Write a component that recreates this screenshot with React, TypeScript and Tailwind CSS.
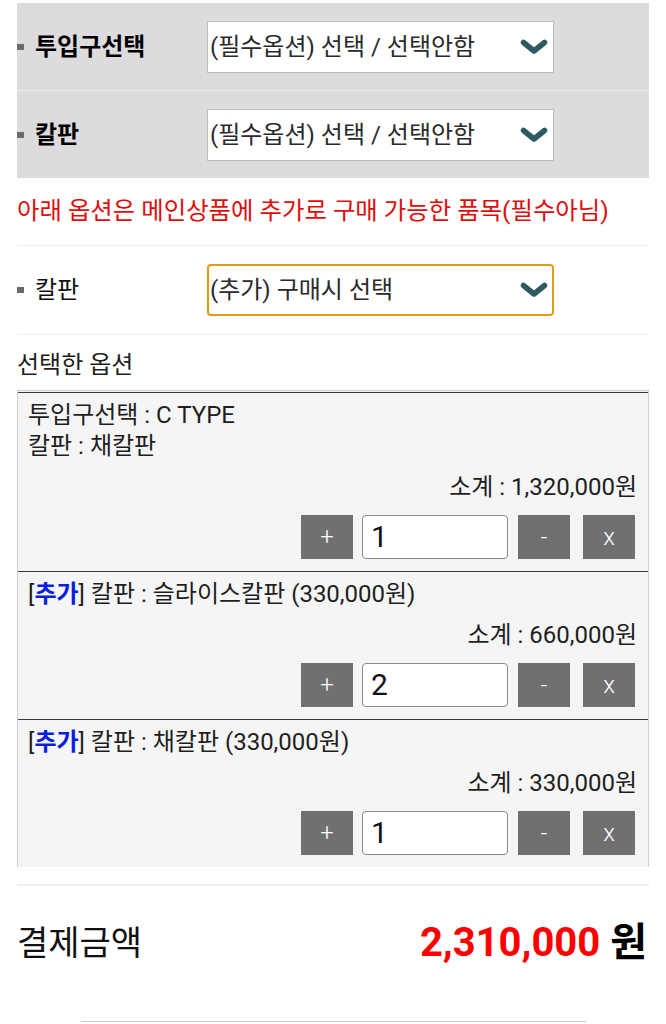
import React from "react";

function Chevron() {
  return (
    <svg width="28" height="16" viewBox="0 0 28 16" className="shrink-0">
      <polyline
        points="3.5,3.5 14,12 24.5,3.5"
        fill="none"
        stroke="#2d5b61"
        strokeWidth={5.5}
        strokeLinecap="round"
        strokeLinejoin="round"
      />
    </svg>
  );
}

function SelectBox({ text, active }: { text: string; active?: boolean }) {
  return (
    <div
      className={
        active
          ? "flex h-[52px] w-[347px] items-center justify-between rounded-[4px] border-2 border-[#e19c12] bg-white pl-[1px] pr-[4px]"
          : "flex h-[52px] w-[347px] items-center justify-between border border-[#bdbdbd] bg-white pl-[2px] pr-[5px]"
      }
    >
      <span className="text-[24px] leading-none text-[#2a2a2a]">{text}</span>
      <Chevron />
    </div>
  );
}

function Bullet() {
  return <span className="mr-[11px] inline-block h-[6px] w-[7px] shrink-0 bg-[#6a6a6a]" />;
}

interface Item {
  lines: React.ReactNode[];
  subtotal: string;
  qty: string;
}

const ITEMS: Item[] = [
  {
    lines: ["투입구선택 : C TYPE", "칼판 : 채칼판"],
    subtotal: "1,320,000원",
    qty: "1",
  },
  {
    lines: [
      <>
        [<b className="text-[#0a1ee0]">추가</b>] 칼판 : 슬라이스칼판 (330,000원)
      </>,
    ],
    subtotal: "660,000원",
    qty: "2",
  },
  {
    lines: [
      <>
        [<b className="text-[#0a1ee0]">추가</b>] 칼판 : 채칼판 (330,000원)
      </>,
    ],
    subtotal: "330,000원",
    qty: "1",
  },
];

function QtyButton({ label }: { label: string }) {
  return (
    <div className="flex h-[44px] w-[52px] items-center justify-center bg-[#707070] text-[24px] font-light leading-none text-white">
      {label}
    </div>
  );
}

function OptionItem({ item }: { item: Item }) {
  return (
    <div className="border-t border-[#3a3a3a] pl-[10px] pr-[11px] pt-[7px] pb-[12px] text-[24px] text-[#1e1e1e]">
      {item.lines.map((l, i) => (
        <div key={i} className="leading-[31px]">
          {l}
        </div>
      ))}
      <div className="mt-[10px] text-right leading-[31px]">소계 : {item.subtotal}</div>
      <div className="mt-[12px] flex justify-end pr-[2px]">
        <QtyButton label="+" />
        <div className="ml-[9px] flex h-[44px] w-[146px] items-center rounded-[4px] border border-[#8a8a8a] bg-white pl-[8px] text-[30px] leading-none text-[#111]">
          {item.qty}
        </div>
        <div className="ml-[10px]">
          <QtyButton label="-" />
        </div>
        <div className="ml-[13px]">
          <QtyButton label="x" />
        </div>
      </div>
    </div>
  );
}

export default function App() {
  return (
    <div className="min-h-[1024px] bg-white font-['Roboto','Noto_Sans_CJK_KR',sans-serif]">
      <div className="mx-[17px] pt-[3px]">
        {/* required options */}
        <div className="bg-[#dddbde]">
          <div className="flex h-[88px] items-center border-b border-[#ececec]">
            <Bullet />
            <span className="w-[172px] text-[24px] font-bold text-black">투입구선택</span>
            <SelectBox text="(필수옵션) 선택 / 선택안함" />
          </div>
          <div className="flex h-[87px] items-center">
            <Bullet />
            <span className="w-[172px] text-[24px] font-bold text-black">칼판</span>
            <SelectBox text="(필수옵션) 선택 / 선택안함" />
          </div>
        </div>

        <div className="flex h-[68px] items-center border-b border-[#eeeeee] text-[24.4px] text-[#e00c0c]">
          아래 옵션은 메인상품에 추가로 구매 가능한 품목(필수아님)
        </div>

        <div className="flex h-[89px] items-center border-b border-[#eeeeee]">
          <Bullet />
          <span className="w-[172px] text-[24px] text-[#111]">칼판</span>
          <SelectBox text="(추가) 구매시 선택" active />
        </div>

        <div className="pt-[15px] pb-[9px] text-[24px] leading-[31px] text-[#1e1e1e]">선택한 옵션</div>

        {/* selected options */}
        <div className="border-x border-t border-[#cfcfcf] bg-[#f5f5f5] pt-[1px]">
          {ITEMS.map((it, i) => (
            <OptionItem key={i} item={it} />
          ))}
        </div>

        <div className="h-[17px]" />
        <div className="border-t-2 border-[#efefef]" />

        <div className="flex h-[114px] items-center justify-between pr-[2px]">
          <span className="text-[34px] text-[#111]">결제금액</span>
          <span className="text-[40px] font-bold leading-none">
            <span className="text-[#f00]">2,310,000</span>
            <span className="text-black"> 원</span>
          </span>
        </div>
      </div>
      <div className="mx-auto mt-[21px] w-[505px] border-t border-[#c8c8c8]" />
    </div>
  );
}
